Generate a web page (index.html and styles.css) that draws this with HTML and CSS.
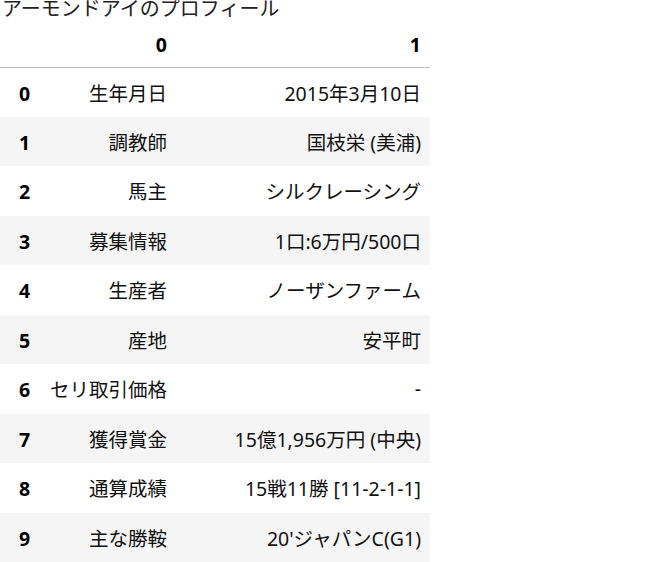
FILE: index.html
```html
<!DOCTYPE html>
<html lang="ja">
<head>
<meta charset="utf-8">
<link rel="stylesheet" href="styles.css">
</head>
<body>
<div class="wrap">
  <table class="df">
    <caption class="cap">アーモンドアイのプロフィール</caption>
    <colgroup>
      <col class="col-idx">
      <col class="col-0">
      <col class="col-1">
    </colgroup>
    <thead>
      <tr><th class="idx"></th><th>0</th><th>1</th></tr>
    </thead>
    <tbody>
      <tr><th class="idx">0</th><td>生年月日</td><td>2015年3月10日</td></tr>
      <tr><th class="idx">1</th><td>調教師</td><td>国枝栄 (美浦)</td></tr>
      <tr><th class="idx">2</th><td>馬主</td><td>シルクレーシング</td></tr>
      <tr><th class="idx">3</th><td>募集情報</td><td>1口:6万円/500口</td></tr>
      <tr><th class="idx">4</th><td>生産者</td><td>ノーザンファーム</td></tr>
      <tr><th class="idx">5</th><td>産地</td><td>安平町</td></tr>
      <tr><th class="idx">6</th><td>セリ取引価格</td><td>-</td></tr>
      <tr><th class="idx">7</th><td>獲得賞金</td><td>15億1,956万円 (中央)</td></tr>
      <tr><th class="idx">8</th><td>通算成績</td><td>15戦11勝 [11-2-1-1]</td></tr>
      <tr><th class="idx">9</th><td>主な勝鞍</td><td>20'ジャパンC(G1)</td></tr>
    </tbody>
  </table>
</div>
</body>
</html>
```
FILE: styles.css
```css
html, body {
  margin: 0;
  padding: 0;
  background: #fff;
}
body {
  font-family: "Noto Sans", "Noto Sans CJK JP", sans-serif;
  color: #000;
  overflow: hidden;
}
.wrap {
  margin-top: -4px;
}
.df {
  border-collapse: collapse;
  border-spacing: 0;
  font-size: 19.5px;
  width: 430px;
  table-layout: fixed;
}
.col-idx { width: 48px; }
.col-0 { width: 128px; }
.col-1 { width: 254px; }
.cap {
  caption-side: top;
  text-align: left;
  padding-left: 2px;
  height: 26px;
  line-height: 26px;
  font-size: 20px;
  color: #222;
  white-space: nowrap;
}
.df thead th {
  height: 45px;
  box-sizing: border-box;
  padding: 0 9px 10px 0;
  font-weight: bold;
  text-align: right;
  border-bottom: 1px solid #bdbdbd;
  vertical-align: bottom;
  line-height: 24px;
}
.df tbody tr {
  height: 49.5px;
}
.df tbody tr:nth-child(odd) {
  background: #fff;
}
.df tbody tr:nth-child(even) {
  background: #f5f5f5;
}
.df tbody th {
  font-weight: bold;
  text-align: left;
  padding: 2px 0 0 19px;
}
.df tbody td {
  text-align: right;
  padding: 0 9px 0 0;
  white-space: nowrap;
  color: #111;
}
```
